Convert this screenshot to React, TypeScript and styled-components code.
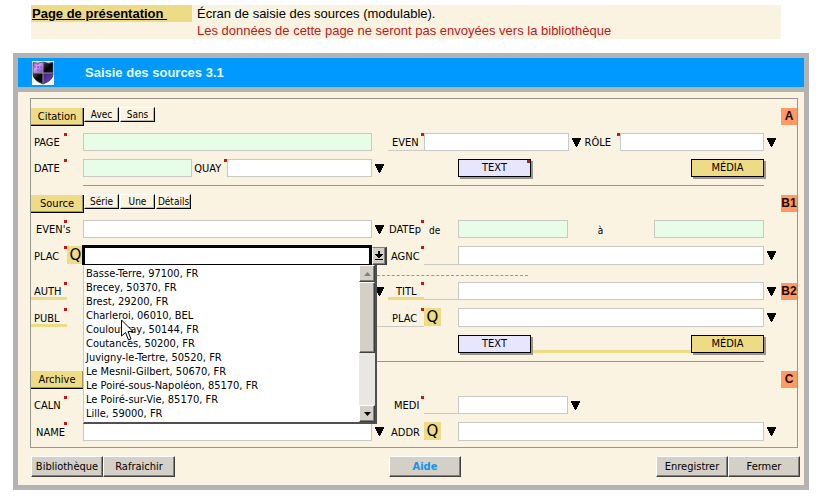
import React from "react";
import styled, { createGlobalStyle, css } from "styled-components";

const ui = `"DejaVu Sans Condensed", "DejaVu Sans", Tahoma, sans-serif`;
const arial = `"Liberation Sans", Arial, sans-serif`;

const Global = createGlobalStyle`
  *, *::before, *::after { box-sizing: border-box; }
  body { margin: 0; background: #fff; color: #000; font: 11px/14px ${ui}; }
  button, input, select { font: inherit; color: inherit; margin: 0; border-radius: 0; }
`;

const Page = styled.div`
  padding: 5px 17px 5px 13px;
`;

const Intro = styled.header`
  display: grid;
  grid-template-columns: 161px 1fr;
  column-gap: 5px;
  margin: 0 28px 14px 18px;
  background: #faf3e1;
  font: 13px/17px ${arial};
`;
const IntroLink = styled.a`
  height: 17px;
  padding-left: 1px;
  background: #eedb86;
  color: #000;
  font-weight: bold;
  white-space: pre;
`;
const IntroText = styled.p<{ $warn?: boolean }>`
  grid-column: 2;
  margin: 0;
  color: ${(p) => (p.$warn ? "#c01818" : "#000")};
`;

const Window = styled.main`
  border: 5px solid #b3b3b3;
  background: #faf3e1;
`;
const TitleBar = styled.div`
  display: flex;
  align-items: center;
  gap: 31px;
  height: 34px;
  padding-left: 14px;
  background: #0099ff;
  border-bottom: 5px solid #b3b3b3;
`;
const Title = styled.h1`
  margin: 0;
  color: #e4fbff;
  font: bold 13px/17px ${arial};
`;
const Body = styled.form`
  padding: 6px 4px 8px 12px;
`;
const Frame = styled.div`
  display: flex;
  flex-direction: column;
  gap: 8px;
  margin-right: 2px;
  padding: 8px 0 6px;
  border: 1px solid #99968e;
`;

const Label = styled.label<{ $w: number; $pad?: number; $bar?: boolean; $line?: boolean }>`
  position: relative;
  flex: none;
  width: ${(p) => p.$w}px;
  padding: 3px 0 0 ${(p) => p.$pad ?? 3}px;
  white-space: nowrap;
  ${(p) => p.$bar && css`box-shadow: inset 0 -3px #eedb86;`}
  ${(p) => p.$line && css`box-shadow: inset 0 -1px #c8c8c4;`}
`;
const Row = styled.div<{ $tall?: boolean }>`
  display: grid;
  grid-template-columns: 52px minmax(0, 289fr) 16px 70px minmax(0, 306fr) 17px 16px;
  height: ${(p) => (p.$tall ? 19 : 18)}px;
  ${(p) => p.$tall && css`${Label} { padding-top: 4px; }`}
`;
const Span = styled.div<{ $from: number; $to: number; $spread?: boolean }>`
  grid-column: ${(p) => p.$from} / ${(p) => p.$to};
  grid-row: 1;
  display: flex;
  min-width: 0;
  justify-content: ${(p) => (p.$spread ? "space-between" : "flex-start")};
`;
const Dot = styled.i`
  position: absolute;
  top: 0;
  right: 0;
  width: 3px;
  height: 3px;
  background: #cc1414;
`;
const Underline = styled.span`
  flex: 1;
  border-bottom: 1px solid #c8c8c4;
`;

const fieldLook = css<{ $green?: boolean; $grow?: number }>`
  flex: ${(p) => p.$grow ?? 1} 1 0;
  min-width: 0;
  height: 100%;
  padding: 0;
  text-indent: 3px;
  appearance: none;
  border: 1px solid #c8c8c4;
  background: ${(p) => (p.$green ? "#e8fde8" : "#fff")};
  outline: none;
`;
const TextField = styled.input`${fieldLook}`;
const Choice = styled.select`${fieldLook}`;
const ArrowBox = styled.svg`
  display: block;
  flex: none;
  width: 16px;
  height: 18px;
`;
const Filler = styled.span<{ $grow: number }>`
  display: flex;
  flex: ${(p) => p.$grow} 1 0;
  min-width: 0;
`;
const Small = styled.span<{ $center?: boolean }>`
  flex: 1;
  padding: 4px 0 0 5px;
  text-align: ${(p) => (p.$center ? "center" : "left")};
  font-size: 10px;
  padding-right: ${(p) => (p.$center ? 26 : 0)}px;
`;

const Lookup = styled.button`
  flex: none;
  width: 17px;
  height: 18px;
  padding: 0;
  border: 0;
  background: #eedb86;
  && { font-size: 15px; line-height: 18px; font-family: "DejaVu Sans", sans-serif; }
`;
const Badge = styled.strong`
  grid-column: 7;
  grid-row: 1;
  height: 17px;
  margin-top: 1px;
  background: #ff9966;
  color: #1c0a04;
  font: bold 12px/17px "Liberation Sans Narrow", ${arial};
  text-align: center;
`;
const Tabs = styled.div`
  grid-column: 1 / 4;
  grid-row: 1;
  display: flex;
  align-items: flex-start;
  gap: 1px;
`;
const SectionTab = styled.button`
  width: 53px;
  height: 18px;
  margin: 1px -1px 0 0;
  padding: 0;
  border: solid;
  border-width: 0 1px 1px 0;
  border-color: #000;
  background: #eedb86;
  box-shadow: inset -1px -1px #a39455;
`;
const SmallTab = styled.button`
  width: 35px;
  height: 15px;
  padding: 0;
  border: 1px solid;
  border-color: #fff #000 #000 #fff;
  background: #faf3e1;
  box-shadow: inset -1px -1px #bdb8aa;
  && { font-size: 10px; line-height: 12px; }
`;
const Block = styled.button<{ $gold?: boolean }>`
  position: relative;
  flex: none;
  width: 73px;
  height: 18px;
  padding: 0;
  border: 1px solid #000;
  background: ${(p) => (p.$gold ? "#eedb86" : "#e6e6ff")};
  box-shadow: 2px 2px #99968e;
`;
const GoldLine = styled.span`
  flex: 1;
  align-self: flex-end;
  height: 3px;
  background: #eedb86;
`;
const Rule = styled.hr`
  align-self: stretch;
  height: 1px;
  margin: 0 33px 0 52px;
  border: 0;
  background: #99968e;
`;
const DashRow = styled(Row)`
  height: 1px;
`;
const Dashes = styled.span`
  width: 156px;
  height: 3px;
  border-bottom: 1px dashed #99968e;
`;

const Combo = styled.div`
  position: relative;
  flex: 1;
  display: flex;
  min-width: 0;
`;
const ComboInput = styled.input`
  flex: 1;
  min-width: 0;
  height: 20px;
  margin: -1px 0 0 -1px;
  padding: 0 2px;
  border: 3px solid #000;
  border-bottom-width: 1px;
  outline: none;
`;
const bevel = css`
  padding: 0;
  border: 1px solid;
  border-color: #fff #404040 #404040 #fff;
  background: #d4d0c8;
  box-shadow: inset -1px -1px #808080;
`;
const ComboButton = styled.button`
  ${bevel}
  flex: none;
  width: 15px;
  height: 18px;
  margin: 1px -15px 0 0;
  border-color: #808080 #404040 #404040 #fff;
  border-right-width: 2px;
  display: grid;
  place-items: center;
`;
const Popup = styled.div`
  position: absolute;
  z-index: 2;
  top: 19px;
  left: 0;
  right: -5px;
  display: flex;
  border: 1px solid #808080;
  border-width: 0 2px 2px 1px;
  border-color: #fff #505050 #505050 #c8c8c4;
  background: #fff;
`;
const Options = styled.ul`
  flex: 1;
  margin: 0;
  padding: 2px 0 1px 2px;
  list-style: none;
`;
const Option = styled.li`
  height: 14px;
  white-space: nowrap;
`;
const ScrollBar = styled.div`
  display: flex;
  flex-direction: column;
  width: 16px;
  background: #e9e7e3;
`;
const ScrollButton = styled.button`
  ${bevel}
  height: 17px;
  display: grid;
  place-items: center;
`;
const Thumb = styled.div`
  ${bevel}
  height: 71px;
  margin-bottom: auto;
`;
const Pointer = styled.svg`
  position: absolute;
  top: 54px;
  left: 37px;
  width: 13px;
  height: 22px;
`;

const Footer = styled.div`
  display: grid;
  grid-template-columns: 358fr 411fr;
  margin-top: 8px;
  padding-left: 1px;
`;
const Group = styled.div<{ $spread?: boolean }>`
  display: flex;
  justify-content: ${(p) => (p.$spread ? "space-between" : "flex-start")};
`;
const Push = styled.button<{ $help?: boolean }>`
  ${bevel}
  width: 72px;
  height: 21px;
  ${(p) => p.$help && css`&& { color: #1492ea; font-weight: bold; font-size: 11px; }`}
`;

const Arrow = () => (
  <ArrowBox viewBox="0 0 16 18" aria-hidden="true">
    <path d="M3 5h9v2h-1v2h-1v2h-1v2h-1v1h-1v-1h-1v-2h-1v-2h-1v-2h-1z" shapeRendering="crispEdges" />
  </ArrowBox>
);

const outline = "M1 1.500Q6 3 11 1Q16 3 21 1.500V14Q20 20 11 23Q2 20 1 14Z";
const Shield = () => (
  <svg width="22" height="24" viewBox="0 0 22 24" aria-hidden="true">
    <defs>
      <linearGradient id="lilac" x1="0" y1="0" x2="1" y2="1">
        <stop offset="0" stopColor="#7a35c4" />
        <stop offset=".45" stopColor="#d3a4f6" />
        <stop offset="1" stopColor="#7a3fc8" />
      </linearGradient>
      <linearGradient id="coal" x1="0" y1="0" x2="1" y2="1">
        <stop offset="0" stopColor="#4c4c54" />
        <stop offset=".5" stopColor="#050508" />
        <stop offset="1" stopColor="#16161c" />
      </linearGradient>
      <linearGradient id="violet" x1="0" y1="0" x2="1" y2="1">
        <stop offset="0" stopColor="#432080" />
        <stop offset="1" stopColor="#7a48cc" />
      </linearGradient>
      <clipPath id="shape">
        <path d={outline} />
      </clipPath>
    </defs>
    <path d="M0 0h22v24H0z" fill="#fff" />
    <g clipPath="url(#shape)">
      <path d="M0 0h11v12H0z" fill="url(#lilac)" />
      <path d="M11 0h11v12H11z" fill="url(#coal)" />
      <path d="M0 12h11v12H0z" fill="url(#coal)" />
      <path d="M11 12h11v12H11z" fill="url(#violet)" />
      <path d="M2 6h8M6 2v8" stroke="#8b4bd0" strokeDasharray="2 1" />
      <path d="M11 0v24M0 12h22" stroke="#8f8f9c" />
    </g>
    <path d={outline} fill="none" stroke="#3a3a48" strokeOpacity=".8" />
  </svg>
);

const places = [
  "Basse-Terre, 97100, FR",
  "Brecey, 50370, FR",
  "Brest, 29200, FR",
  "Charleroi, 06010, BEL",
  "Coulouvray, 50144, FR",
  "Coutances, 50200, FR",
  "Juvigny-le-Tertre, 50520, FR",
  "Le Mesnil-Gilbert, 50670, FR",
  "Le Poiré-sous-Napoléon, 85170, FR",
  "Le Poiré-sur-Vie, 85170, FR",
  "Lille, 59000, FR",
];

type CaptionProps = {
  id: string;
  text: string;
  w?: number;
  pad?: number;
  bar?: boolean;
  line?: boolean;
  dot?: boolean;
};
const Caption = ({ id, text, w = 36, pad, bar, line, dot = true }: CaptionProps) => (
  <Label htmlFor={id} $w={w} $pad={pad} $bar={bar} $line={line}>
    {text}
    {dot && <Dot />}
  </Label>
);

const Section = ({ name, tabs, badge }: { name: string; tabs: string[]; badge: string }) => (
  <Row>
    <Tabs>
      <SectionTab type="button">{name}</SectionTab>
      {tabs.map((t) => (
        <SmallTab type="button" key={t}>{t}</SmallTab>
      ))}
    </Tabs>
    <Badge>{badge}</Badge>
  </Row>
);

const PlaceCombo = () => (
  <Combo>
    <ComboInput id="plac" role="combobox" aria-expanded="true" aria-controls="places" />
    <ComboButton type="button" aria-label="Ouvrir la liste">
      <svg width="8" height="10" viewBox="0 0 8 10" shapeRendering="crispEdges">
        <path d="M3 0h2v3h3v1h-1v1h-1v1h-1v1h-2v-1h-1v-1h-1v-1h-1v-1h3zM0 8h8v1h-8z" />
      </svg>
    </ComboButton>
    <Popup>
      <Options id="places" role="listbox" aria-label="PLAC">
        {places.map((p) => (
          <Option role="option" aria-selected="false" key={p}>{p}</Option>
        ))}
      </Options>
      <ScrollBar>
        <ScrollButton type="button" aria-label="Défiler vers le haut">
          <svg width="7" height="4" viewBox="0 0 7 4"><path d="M0 4L3.500 0L7 4z" fill="#808080" /></svg>
        </ScrollButton>
        <Thumb />
        <ScrollButton type="button" aria-label="Défiler vers le bas">
          <svg width="7" height="4" viewBox="0 0 7 4"><path d="M0 0L3.500 4L7 0z" /></svg>
        </ScrollButton>
      </ScrollBar>
      <Pointer viewBox="0 0 13 22" aria-hidden="true">
        <path d="M.5 1v16l4-3.500 3 7.500 2.500-1-3-7.500h5z" fill="#fff" stroke="#000" />
      </Pointer>
    </Popup>
  </Combo>
);

export default function App() {
  return (
    <>
      <Global />
      <Page>
        <Intro>
          <IntroLink href="#presentation">{"Page de présentation "}</IntroLink>
          <IntroText>Écran de saisie des sources (modulable).</IntroText>
          <IntroText $warn>Les données de cette page ne seront pas envoyées vers la bibliothèque</IntroText>
        </Intro>
        <Window>
          <TitleBar>
            <Shield />
            <Title>Saisie des sources 3.1</Title>
          </TitleBar>
          <Body>
            <Frame>
              <Section name="Citation" tabs={["Avec", "Sans"]} badge="A" />
              <Row>
                <Caption id="page" text="PAGE" />
                <Span $from={2} $to={3}><TextField id="page" $green /></Span>
                <Span $from={4} $to={6}>
                  <Caption id="even" text="EVEN" pad={4} line />
                  <Choice id="even" />
                  <Arrow />
                  <Caption id="role" text="RÔLE" w={35} pad={0} />
                  <Choice id="role" />
                </Span>
                <Span $from={6} $to={7}><Arrow /></Span>
              </Row>
              <Row>
                <Caption id="date" text="DATE" />
                <Span $from={2} $to={3}>
                  <TextField id="date" $green $grow={109} />
                  <Caption id="quay" text="QUAY" w={35} pad={2} />
                  <Choice id="quay" $grow={145} />
                </Span>
                <Span $from={3} $to={4}><Arrow /></Span>
                <Span $from={5} $to={6} $spread>
                  <Block type="button">TEXT<Dot /></Block>
                  <Block type="button" $gold>MÉDIA</Block>
                </Span>
              </Row>
              <Rule />
              <Section name="Source" tabs={["Série", "Une", "Détails"]} badge="B1" />
              <Row>
                <Caption id="evens" text="EVEN's" pad={5} />
                <Span $from={2} $to={3}><Choice id="evens" /></Span>
                <Span $from={3} $to={4}><Arrow /></Span>
                <Span $from={4} $to={5}>
                  <Caption id="datep" text="DATEp" pad={1} />
                  <Small>de</Small>
                </Span>
                <Span $from={5} $to={6}>
                  <TextField id="datep" $green $grow={109} />
                  <Filler $grow={88}><Small $center>à</Small></Filler>
                  <TextField aria-label="DATEp à" $green $grow={109} />
                </Span>
              </Row>
              <Row $tall>
                <Span $from={1} $to={2}>
                  <Caption id="plac" text="PLAC" />
                  <Lookup type="button" aria-label="Rechercher PLAC">Q</Lookup>
                </Span>
                <Span $from={2} $to={3}><PlaceCombo /></Span>
                <Span $from={4} $to={5}>
                  <Caption id="agnc" text="AGNC" />
                  <Underline />
                </Span>
                <Span $from={5} $to={6}><Choice id="agnc" /></Span>
                <Span $from={6} $to={7}><Arrow /></Span>
              </Row>
              <DashRow>
                <Span $from={3} $to={6}><Dashes /></Span>
              </DashRow>
              <Row>
                <Caption id="auth" text="AUTH" bar />
                <Span $from={2} $to={3}><Choice id="auth" /></Span>
                <Span $from={3} $to={4}><Arrow /></Span>
                <Span $from={4} $to={5}>
                  <Caption id="titl" text="TITL" pad={8} bar />
                  <Underline />
                </Span>
                <Span $from={5} $to={6}><Choice id="titl" /></Span>
                <Span $from={6} $to={7}><Arrow /></Span>
                <Badge>B2</Badge>
              </Row>
              <Row $tall>
                <Caption id="publ" text="PUBL" bar />
                <Span $from={2} $to={3}><TextField id="publ" /></Span>
                <Span $from={3} $to={5}>
                  <Caption id="plac2" text="PLAC" w={52} pad={20} line />
                  <Lookup type="button" aria-label="Rechercher PLAC">Q</Lookup>
                </Span>
                <Span $from={5} $to={6}><Choice id="plac2" /></Span>
                <Span $from={6} $to={7}><Arrow /></Span>
              </Row>
              <Row>
                <Span $from={5} $to={6}>
                  <Block type="button">TEXT</Block>
                  <GoldLine />
                  <Block type="button" $gold>MÉDIA</Block>
                </Span>
              </Row>
              <Rule />
              <Section name="Archive" tabs={[]} badge="C" />
              <Row>
                <Caption id="caln" text="CALN" />
                <Span $from={2} $to={3}><TextField id="caln" /></Span>
                <Span $from={4} $to={5}>
                  <Caption id="medi" text="MEDI" pad={6} />
                  <Underline />
                </Span>
                <Span $from={5} $to={6}>
                  <Choice id="medi" $grow={109} />
                  <Filler $grow={197}><Arrow /></Filler>
                </Span>
              </Row>
              <Row $tall>
                <Caption id="name" text="NAME" pad={5} />
                <Span $from={2} $to={3}><Choice id="name" /></Span>
                <Span $from={3} $to={4}><Arrow /></Span>
                <Span $from={4} $to={5}>
                  <Caption id="addr" text="ADDR" dot={false} />
                  <Lookup type="button" aria-label="Rechercher ADDR">Q</Lookup>
                </Span>
                <Span $from={5} $to={6}><Choice id="addr" /></Span>
                <Span $from={6} $to={7}><Arrow /></Span>
              </Row>
            </Frame>
            <Footer>
              <Group>
                <Push type="button">Bibliothèque</Push>
                <Push type="button">Rafraichir</Push>
              </Group>
              <Group $spread>
                <Push type="button" $help>Aide</Push>
                <Group>
                  <Push type="button">Enregistrer</Push>
                  <Push type="button">Fermer</Push>
                </Group>
              </Group>
            </Footer>
          </Body>
        </Window>
      </Page>
    </>
  );
}
